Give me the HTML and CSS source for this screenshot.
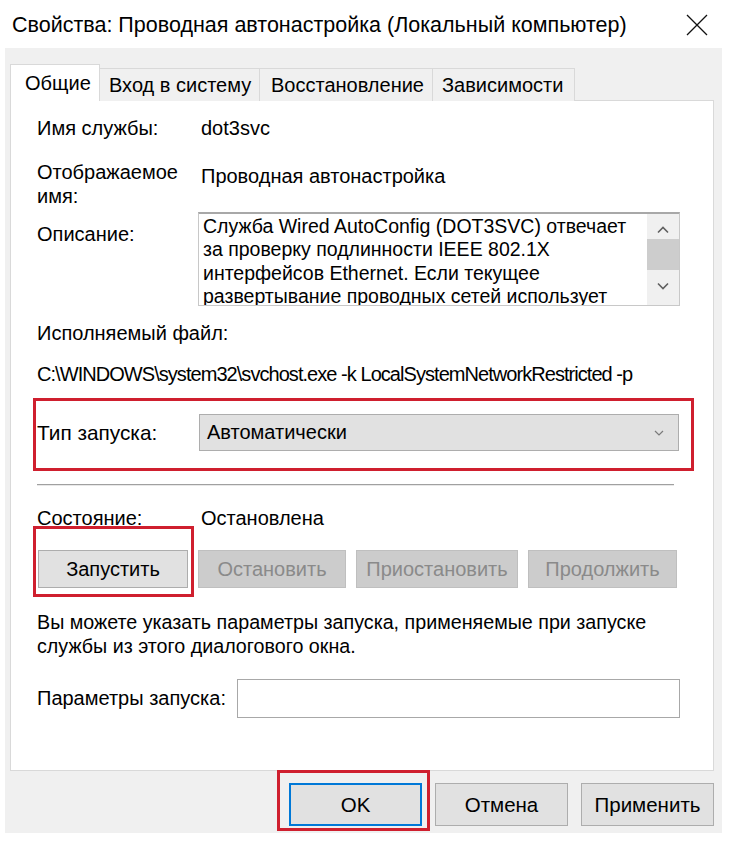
FILE: index.html
```html
<!DOCTYPE html>
<html lang="ru">
<head>
  <meta charset="UTF-8">
  <meta name="viewport" content="width=device-width, initial-scale=1.0">
  <title>Свойства: Проводная автонастройка</title>
  <link rel="stylesheet" href="styles.css">
</head>
<body>
  <div class="window">
    <div class="titlebar">
      <span class="title">Свойства: Проводная автонастройка (Локальный компьютер)</span>
      <svg class="close-icon" width="22" height="22" viewBox="0 0 22 22">
        <path d="M1 1 L21 21 M21 1 L1 21" stroke="#111" stroke-width="1.3" fill="none"/>
      </svg>
    </div>

    <div class="client">
      <div class="tabs">
        <div class="tab active">Общие</div>
        <div class="tab">Вход в систему</div>
        <div class="tab">Восстановление</div>
        <div class="tab">Зависимости</div>
      </div>

      <div class="panel">
        <div class="row row-name">
          <span class="label">Имя службы:</span>
          <span class="value">dot3svc</span>
        </div>

        <div class="row row-display">
          <span class="label">Отображаемое<br>имя:</span>
          <span class="value">Проводная автонастройка</span>
        </div>

        <div class="row row-desc">
          <span class="label">Описание:</span>
          <div class="desc-box">
            <div class="desc-text">Служба Wired AutoConfig (DOT3SVC) отвечает<br>за проверку подлинности IEEE 802.1X<br>интерфейсов Ethernet. Если текущее<br>развертывание проводных сетей использует</div>
            <div class="scrollbar">
              <svg class="arrow" width="12" height="8" viewBox="0 0 12 8"><path d="M1 6.5 L6 1.5 L11 6.5" stroke="#606060" stroke-width="1.6" fill="none"/></svg>
              <div class="thumb"></div>
              <svg class="arrow" width="12" height="8" viewBox="0 0 12 8"><path d="M1 1.5 L6 6.5 L11 1.5" stroke="#606060" stroke-width="1.6" fill="none"/></svg>
            </div>
          </div>
        </div>

        <div class="narrow exe-label">Исполняемый файл:</div>
        <div class="narrow exe-path">C:\WINDOWS\system32\svchost.exe -k LocalSystemNetworkRestricted -p</div>

        <div class="startup-row marked">
          <span class="narrow startup-label">Тип запуска:</span>
          <div class="select">
            <span class="narrow">Автоматически</span>
            <svg width="12" height="8" viewBox="0 0 12 8"><path d="M2 2 L6 6 L10 2" stroke="#7a7a7a" stroke-width="1.2" fill="none"/></svg>
          </div>
        </div>

        <div class="separator"></div>

        <div class="narrow row row-status">
          <span class="label">Состояние:</span>
          <span class="value">Остановлена</span>
        </div>

        <div class="service-buttons">
          <div class="mark-wrap start-wrap">
            <button class="narrow btn btn-start">Запустить</button>
          </div>
          <button class="narrow btn btn-stop" disabled>Остановить</button>
          <button class="narrow btn btn-pause" disabled>Приостановить</button>
          <button class="narrow btn btn-resume" disabled>Продолжить</button>
        </div>

        <p class="narrow hint">Вы можете указать параметры запуска, применяемые при запуске<br>службы из этого диалогового окна.</p>

        <div class="params-row">
          <span class="narrow params-label">Параметры запуска:</span>
          <input type="text" class="params-input">
        </div>
      </div>

      <div class="dialog-buttons">
        <div class="mark-wrap ok-wrap">
          <button class="btn dlg-btn btn-ok">OK</button>
        </div>
        <button class="btn dlg-btn">Отмена</button>
        <button class="btn dlg-btn">Применить</button>
      </div>
    </div>
  </div>
</body>
</html>
```

FILE: styles.css
```css
* {
  box-sizing: border-box;
  margin: 0;
  padding: 0;
}

body {
  font-family: "Liberation Sans", Arial, sans-serif;
  font-size: 20px;
  color: #000;
  background: #fff;
  width: 730px;
  height: 848px;
  overflow: hidden;
}

.narrow {
  font-family: "Liberation Sans", Arial, sans-serif;
  font-size: 20px;
}

/* Title bar */
.titlebar {
  height: 48px;
  display: flex;
  align-items: center;
  justify-content: space-between;
  padding: 2px 22px 0 12px;
}

.title {
  font-size: 21.5px;
}

/* Client area */
.client {
  background: #f0f0f0;
  margin: 0 8px 0 5px;
  height: 785px;
  padding: 16px 8px 0 5px;
}

.tabs {
  display: flex;
  align-items: flex-end;
  height: 37px;
  position: relative;
  z-index: 1;
  margin-bottom: -1px;
}

.tab {
  font-size: 20px;
  height: 33px;
  line-height: 32px;
  padding: 0 0 0 9px;
  white-space: nowrap;
  border: 1px solid #d9d9d9;
  border-bottom: none;
  border-left: none;
  background: #f0f0f0;
}

.tab:nth-child(2) { width: 160px; }
.tab:nth-child(3) { width: 173px; padding-left: 11px; }
.tab:nth-child(4) { width: 142px; }

.tab.active {
  width: 90px;
  height: 37px;
  line-height: 36px;
  padding-left: 14px;
  background: #fff;
  border-left: 1px solid #d9d9d9;
}

.panel {
  background: #fff;
  border: 1px solid #d9d9d9;
  width: 704px;
  height: 671px;
  padding: 16px 33px 0 26px;
}

/* Label/value rows */
.row {
  display: flex;
  line-height: 22px;
}

.row .label {
  width: 164px;
  flex-shrink: 0;
}

.row-display {
  margin-top: 21px;
  line-height: 24px;
}

.row-display .value {
  padding-top: 4px;
}

.row-desc {
  margin-top: 4px;
}

.row-desc .label {
  width: 161px;
  padding-top: 11px;
}

.desc-box {
  width: 482px;
  height: 94px;
  border: 1px solid #c8c8c8;
  border-top: 2px solid #a8a8a8;
  display: flex;
  overflow: hidden;
}

.desc-text {
  flex: 1;
  font-size: 19.5px;
  padding: 1px 0 0 4px;
  line-height: 23.4px;
  overflow: hidden;
  white-space: nowrap;
}

.scrollbar {
  width: 32px;
  background: #f0f0f0;
  display: flex;
  flex-direction: column;
  align-items: center;
  padding-top: 12px;
}

.scrollbar .thumb {
  width: 100%;
  height: 31px;
  background: #cdcdcd;
  margin: 5px 0 12px;
}

.exe-label {
  margin-top: 16px;
  line-height: 22px;
}

.exe-path {
  margin-top: 19px;
  line-height: 22px;
  letter-spacing: -0.95px;
  white-space: nowrap;
}

/* Startup type */
.startup-row {
  display: flex;
  align-items: center;
  margin: 13px -14px 0 -4px;
  height: 73px;
  padding: 10px 12px 14px 1px;
}

.marked {
  border: 3px solid #cf1f2e;
}

.startup-label {
  width: 162px;
  font-size: 20.8px;
}

.select {
  flex: 1;
  height: 37px;
  background: #e1e1e1;
  border: 1px solid #adadad;
  display: flex;
  align-items: center;
  justify-content: space-between;
  padding: 0 13px 0 7px;
}

.separator {
  margin-top: 13px;
  width: 637px;
  border-top: 1px solid #a0a0a0;
  border-bottom: 1px solid #e8e8e8;
}

.row-status {
  margin-top: 21px;
}

/* Buttons */
.btn {
  font-family: inherit;
  font-size: 20px;
  height: 38px;
  background: #e1e1e1;
  border: 1px solid #adadad;
  color: #000;
}

.btn:disabled {
  background: #cccccc;
  border-color: #bfbfbf;
  color: #8a8a8a;
}

.service-buttons {
  display: flex;
  gap: 10px;
  margin: 21px 0 0 1px;
}

.mark-wrap {
  position: relative;
  display: flex;
}

.mark-wrap::after {
  content: "";
  position: absolute;
  border: 3px solid #cf1f2e;
  pointer-events: none;
}

.start-wrap::after {
  top: -24px;
  left: -5px;
  right: -6px;
  bottom: -9px;
}

.btn-start { width: 150px; }
.btn-stop { width: 148px; }
.btn-pause { width: 162px; }
.btn-resume { width: 149px; }

.hint {
  margin-top: 22px;
  line-height: 24px;
  font-size: 19.7px;
}

.params-row {
  display: flex;
  align-items: center;
  margin-top: 21px;
}

.params-label {
  width: 200px;
}

.params-input {
  flex: 1;
  height: 39px;
  border: 1px solid #a8a8a8;
  background: #fff;
}

/* Dialog buttons */
.dialog-buttons {
  display: flex;
  justify-content: flex-end;
  gap: 13px;
  margin-top: 12px;
}

.dlg-btn {
  width: 133px;
  height: 43px;
  font-size: 20.5px;
}

.btn-ok {
  border: 2px solid #0078d7;
}

.ok-wrap::after {
  top: -13px;
  left: -12px;
  right: -8px;
  bottom: -5px;
}
```
